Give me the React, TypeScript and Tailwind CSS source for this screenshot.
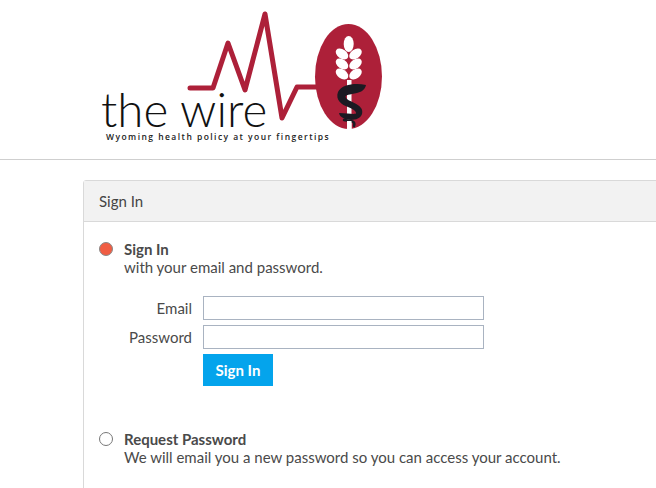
import React from 'react';

const Logo = () => (
  <svg width="300" height="150" viewBox="90 0 300 150" className="block ml-[90px]">
    <polyline
      points="190,88 213,88 228,43 245,90 265,14 282,118 297,87 318,87"
      fill="none"
      stroke="#ad2039"
      strokeWidth="5"
      strokeLinecap="round"
      strokeLinejoin="round"
    />
    <ellipse cx="348.5" cy="76.5" rx="33.5" ry="52.5" fill="#ad2039" />
    <g fill="#fff">
      <ellipse cx="348.7" cy="44" rx="5" ry="8" />
      <ellipse cx="342" cy="54" rx="7" ry="4.5" transform="rotate(35 342 54)" />
      <ellipse cx="355.5" cy="54" rx="7" ry="4.5" transform="rotate(-35 355.5 54)" />
      <ellipse cx="342" cy="64" rx="7" ry="4.5" transform="rotate(35 342 64)" />
      <ellipse cx="355.5" cy="64" rx="7" ry="4.5" transform="rotate(-35 355.5 64)" />
      <ellipse cx="342" cy="74" rx="7" ry="4.5" transform="rotate(35 342 74)" />
      <ellipse cx="355.5" cy="74" rx="7" ry="4.5" transform="rotate(-35 355.5 74)" />
      <rect x="347" y="80" width="4.5" height="49" />
    </g>
    <path
      d="M366 85 C356 83 342 84 338 92 C335 100 342 105 348 107 C353 109 356 111 356 113 C356 115 348 113 339 113 C340 121 359 123 362 114 C365 105 350 102 347 99 C344 96 346 95 352 94 C359 93 365 91 366 85 Z"
      fill="#1c1a22"
    />
    <path d="M344 120 C349 121 356 120 354 126" fill="none" stroke="#1c1a22" strokeWidth="2.5" strokeLinecap="round" />
    <rect x="347" y="121" width="4.5" height="8" fill="#fff" />
    <text x="101" y="127" fontFamily="Lato, sans-serif" fontWeight="300" fontSize="47.5" fill="#111">
      the wire
    </text>
    <text x="106" y="140" fontFamily="'Open Sans', sans-serif" fontWeight="600" fontSize="8.5" letterSpacing="1.45" fill="#222">
      Wyoming health policy at your fingertips
    </text>
  </svg>
);

const TextField = ({ label, type }: { label: string; type: string }) => (
  <label className="flex items-center h-[24px]">
    <span className="w-[109px] pr-[11px] text-right shrink-0">{label}</span>
    <input type={type} className="w-[281px] h-[24px] border border-[#a9b3c1] bg-white" />
  </label>
);

export default function App() {
  return (
    <div className="h-[488px] w-[656px] overflow-hidden bg-white text-[15px] leading-[18px] text-[#4a4a4a] font-['Lato',sans-serif]">
      <header className="h-[160px] border-b border-[#cfcfcf]">
        <Logo />
      </header>
      <main className="ml-[83px] mt-5 w-[700px] h-[400px] border border-[#d9d9d9] rounded-tl-[3px]">
        <div className="h-[41px] flex items-center px-[15px] bg-[#f2f2f2] border-b border-[#d9d9d9] text-[#444]">
          Sign In
        </div>
        <section className="pt-[18px] pl-[15px]">
          <div className="flex gap-[11px]">
            <span className="mt-[2px] w-[14px] h-[14px] rounded-full bg-[#f05d43] border border-[#888] shrink-0" />
            <div>
              <div className="font-bold">Sign In</div>
              <div>with your email and password.</div>
            </div>
          </div>
          <div className="mt-[20px] ml-[-5px] flex flex-col gap-[5px]">
            <TextField label="Email" type="email" />
            <TextField label="Password" type="password" />
          </div>
          <button className="block mt-[5px] ml-[104px] w-[70px] h-[32px] bg-[#04a4ec] text-white font-bold">
            Sign In
          </button>
          <div className="flex gap-[11px] mt-[44px]">
            <span className="mt-[2px] w-[14px] h-[14px] rounded-full bg-white border border-[#777] shrink-0" />
            <div>
              <div className="font-bold">Request Password</div>
              <div>We will email you a new password so you can access your account.</div>
            </div>
          </div>
        </section>
      </main>
    </div>
  );
}
